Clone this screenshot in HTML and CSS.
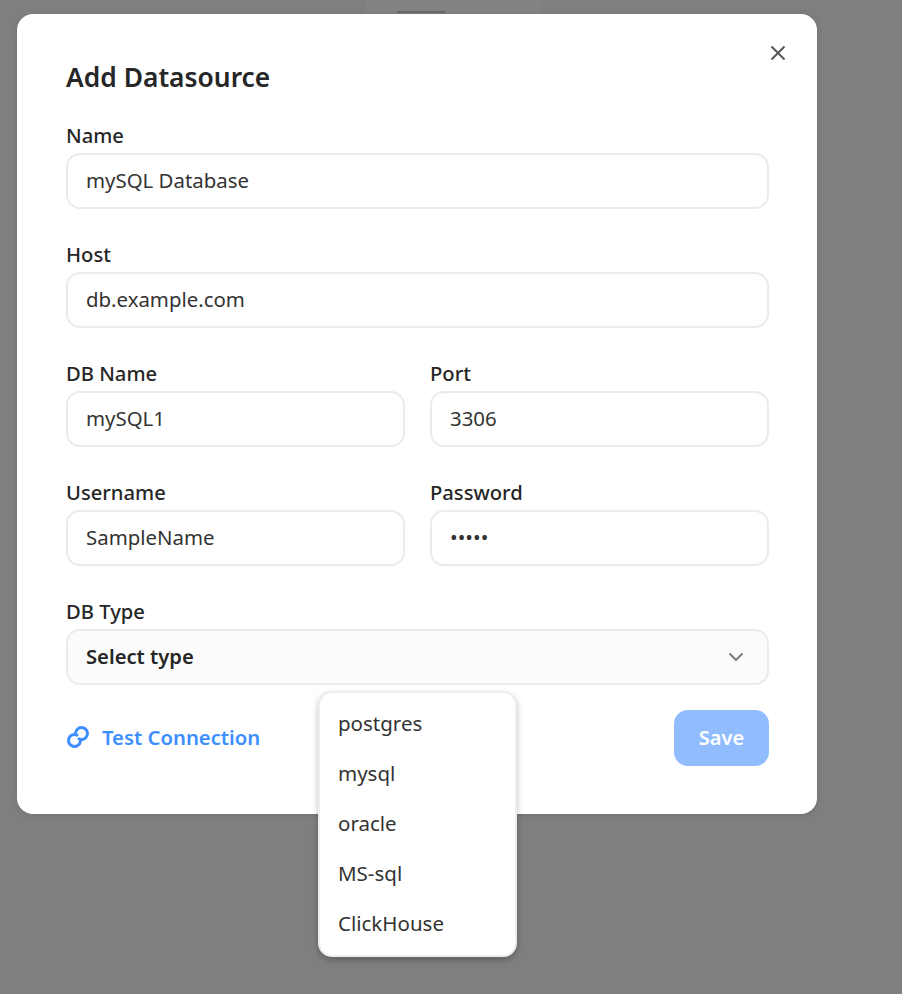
FILE: index.html
```html
<!DOCTYPE html>
<html lang="en">

<head>
    <meta charset="UTF-8">
    <title>Add Datasource</title>
    <link rel="stylesheet" href="styles.css">
</head>

<body>
    <div class="backdrop">
        <div class="bg-tab"><div class="bg-tab-line"></div></div>

        <div class="modal">
            <button class="close" type="button" aria-label="Close">
                <svg width="16" height="16" viewBox="0 0 16 16"><path d="M1.500 1.500 14.500 14.500M14.500 1.500 1.500 14.500" fill="none" stroke="#555" stroke-width="1.9"/></svg>
            </button>

            <h2 class="title">Add Datasource</h2>

            <div class="fields">
                <div class="field">
                    <label>Name</label>
                    <input class="input" type="text" value="mySQL Database">
                </div>
                <div class="field">
                    <label>Host</label>
                    <input class="input" type="text" value="db.example.com">
                </div>
                <div class="row">
                    <div class="field">
                        <label>DB Name</label>
                        <input class="input" type="text" value="mySQL1">
                    </div>
                    <div class="field">
                        <label>Port</label>
                        <input class="input" type="text" value="3306">
                    </div>
                </div>
                <div class="row">
                    <div class="field">
                        <label>Username</label>
                        <input class="input" type="text" value="SampleName">
                    </div>
                    <div class="field">
                        <label>Password</label>
                        <input class="input" type="password" value="12345">
                    </div>
                </div>
                <div class="field">
                    <label>DB Type</label>
                    <div class="select">
                        <span>Select type</span>
                        <svg width="16" height="10" viewBox="0 0 16 10"><path d="M1.500 1.500 8 8l6.500-6.500" fill="none" stroke="#777" stroke-width="1.8"/></svg>
                    </div>
                </div>
            </div>

            <div class="actions">
                <a class="test-link" href="#">
                    <svg width="24" height="24" viewBox="0 0 24 24" fill="none" stroke="#3d8fff" stroke-width="3" stroke-linecap="round">
                        <path d="M12.960 13.940A6 6 0 1 0 9.590 7.460"/>
                        <path d="M11.040 10.060A6 6 0 1 0 14.410 16.540"/>
                    </svg>
                    Test Connection
                </a>
                <button class="save" type="button">Save</button>
            </div>

            <ul class="menu">
                <li>postgres</li>
                <li>mysql</li>
                <li>oracle</li>
                <li>MS-sql</li>
                <li>ClickHouse</li>
            </ul>
        </div>
    </div>
</body>

</html>
```

FILE: styles.css
```css
* {
    box-sizing: border-box;
}

body {
    margin: 0;
    font-family: "Noto Sans", "Open Sans", sans-serif;
    color: #262626;
}

.backdrop {
    position: relative;
    height: 994px;
    padding: 14px 0 0 17px;
    background: #7f7f7f;
    overflow: hidden;
}

.bg-tab {
    position: absolute;
    top: -10px;
    left: 365px;
    width: 176px;
    height: 24px;
    background: #838383;
    border-radius: 16px 16px 0 0;
}

.bg-tab-line {
    width: 48px;
    height: 2px;
    margin: 21px 0 0 32px;
    background: #6a6a6a;
}

.modal {
    position: relative;
    width: 800px;
    height: 800px;
    padding: 43px 48px 48px 49px;
    background: #fff;
    border-radius: 16px;
    box-shadow: 0 1px 6px rgba(0, 0, 0, 0.12);
}

.close {
    position: absolute;
    top: 31px;
    right: 31px;
    display: flex;
    padding: 0;
    border: 0;
    background: none;
}

.title {
    margin: 0 0 27px;
    font-size: 26.4px;
    line-height: 40px;
    font-weight: 600;
}

.fields {
    display: flex;
    flex-direction: column;
    gap: 34px;
}

.row {
    display: grid;
    grid-template-columns: 1fr 1fr;
    gap: 25px;
}

.field label {
    display: block;
    height: 24px;
    margin-bottom: 5px;
    font-size: 20.2px;
    line-height: 22px;
    font-weight: 500;
}

.input,
.select {
    display: block;
    width: 100%;
    height: 56px;
    padding: 0 18px 2px;
    border: 2px solid #ebebef;
    border-radius: 14px;
    font: 400 20.4px "Noto Sans", "Open Sans", sans-serif;
    color: #333;
    background: #fff;
}

.select {
    display: flex;
    align-items: center;
    justify-content: space-between;
    padding-right: 23px;
    background: #fbfbfb;
    font-weight: 600;
    font-size: 20.2px;
    color: #262626;
}

.select svg {
    margin-top: 2px;
}

.actions {
    display: flex;
    align-items: center;
    justify-content: space-between;
    margin-top: 25px;
}

.test-link {
    display: flex;
    align-items: center;
    gap: 12px;
    padding-bottom: 2px;
    color: #3d8fff;
    font-size: 20.3px;
    font-weight: 600;
    text-decoration: none;
}

.save {
    width: 95px;
    height: 56px;
    padding: 0 0 2px;
    border: 0;
    border-radius: 14px;
    background: #91bdff;
    color: #fff;
    font: 600 20px "Noto Sans", "Open Sans", sans-serif;
}

.menu {
    position: absolute;
    top: 677px;
    left: 301px;
    width: 199px;
    height: 266px;
    margin: 0;
    padding: 5px 0;
    list-style: none;
    background: #fff;
    border: 2px solid #eeeef2;
    border-radius: 14px;
    box-shadow: 0 3px 6px rgba(0, 0, 0, 0.25);
    font-size: 20.5px;
    color: #333;
}

.menu li {
    height: 50px;
    padding: 0 18px;
    line-height: 50px;
}
```
